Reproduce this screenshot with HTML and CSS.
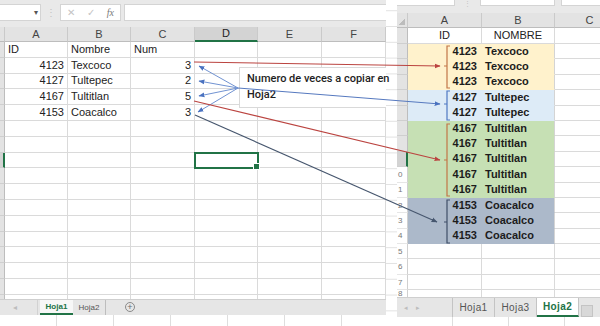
FILE: index.html
```html
<!DOCTYPE html>
<html lang="es">
<head>
    <meta charset="UTF-8">
    <meta name="viewport" content="width=device-width, initial-scale=1.0">
    <title>Hoja1 / Hoja2</title>
    <link rel="stylesheet" href="styles.css">
</head>
<body>
<div class="screen">

    <!-- Libro 1: Hoja1 -->
    <div class="book book-left">
        <div class="formula-bar">
            <div class="name-box"><span class="caret">▾</span></div>
            <span class="grip">⋮</span>
            <div class="fx-box"><span>✕</span><span>✓</span><span class="fx">fx</span></div>
            <div class="formula-input"></div>
        </div>

        <div class="grid">
            <table class="sheet">
                <colgroup>
                    <col class="w-rh"><col class="w-a"><col class="w-b"><col class="w-c"><col class="w-d"><col class="w-e"><col class="w-f">
                </colgroup>
                <tr class="head"><th class="rh"></th><th>A</th><th>B</th><th>C</th><th class="sel">D</th><th>E</th><th>F</th></tr>
                <tr><th class="rh"></th><td>ID</td><td>Nombre</td><td>Num</td><td></td><td></td><td></td></tr>
                <tr><th class="rh"></th><td class="r">4123</td><td>Texcoco</td><td class="r">3</td><td></td><td></td><td></td></tr>
                <tr><th class="rh"></th><td class="r">4127</td><td>Tultepec</td><td class="r">2</td><td></td><td></td><td></td></tr>
                <tr><th class="rh"></th><td class="r">4167</td><td>Tultitlan</td><td class="r">5</td><td></td><td></td><td></td></tr>
                <tr><th class="rh"></th><td class="r">4153</td><td>Coacalco</td><td class="r">3</td><td></td><td></td><td></td></tr>
                <tr><th class="rh"></th><td></td><td></td><td></td><td></td><td></td><td></td></tr>
                <tr><th class="rh"></th><td></td><td></td><td></td><td></td><td></td><td></td></tr>
                <tr><th class="rh sel"></th><td></td><td></td><td></td><td class="active"></td><td></td><td></td></tr>
                <tr><th class="rh"></th><td></td><td></td><td></td><td></td><td></td><td></td></tr>
                <tr><th class="rh"></th><td></td><td></td><td></td><td></td><td></td><td></td></tr>
                <tr><th class="rh"></th><td></td><td></td><td></td><td></td><td></td><td></td></tr>
                <tr><th class="rh"></th><td></td><td></td><td></td><td></td><td></td><td></td></tr>
                <tr><th class="rh"></th><td></td><td></td><td></td><td></td><td></td><td></td></tr>
                <tr><th class="rh"></th><td></td><td></td><td></td><td></td><td></td><td></td></tr>
                <tr><th class="rh"></th><td></td><td></td><td></td><td></td><td></td><td></td></tr>
                <tr><th class="rh"></th><td></td><td></td><td></td><td></td><td></td><td></td></tr>
                <tr><th class="rh"></th><td></td><td></td><td></td><td></td><td></td><td></td></tr>
            </table>
        </div>

        <div class="tabs">
            <div class="tab-nav">◂</div>
            <div class="tab active">Hoja1</div>
            <div class="tab">Hoja2</div>
            <div class="tab-add">+</div>
        </div>
        <div class="under"></div>
    </div>

    <div class="gap"></div>

    <!-- Libro 2: Hoja2 -->
    <div class="book book-right">
        <div class="top-strip">
            <div class="box box-1"></div>
            <span class="grip">⋮</span>
            <div class="box box-2"></div>
            <div class="box box-3"></div>
        </div>

        <div class="grid grid-2">
            <table class="sheet sheet-2">
                <colgroup>
                    <col class="w2-rh"><col class="w2-a"><col class="w2-b"><col class="w2-c">
                </colgroup>
                <tr class="head"><th class="rh corner"></th><th>A</th><th>B</th><th>C</th></tr>
                <tr class="first"><th class="rh"></th><td class="ctr">ID</td><td class="ctr">NOMBRE</td><td></td></tr>
                <tr class="band yellow"><th class="rh"></th><td class="num">4123</td><td class="name">Texcoco</td><td></td></tr>
                <tr class="band yellow"><th class="rh"></th><td class="num">4123</td><td class="name">Texcoco</td><td></td></tr>
                <tr class="band yellow"><th class="rh"></th><td class="num">4123</td><td class="name">Texcoco</td><td></td></tr>
                <tr class="band blue"><th class="rh"></th><td class="num">4127</td><td class="name">Tultepec</td><td></td></tr>
                <tr class="band blue"><th class="rh"></th><td class="num">4127</td><td class="name">Tultepec</td><td></td></tr>
                <tr class="band green"><th class="rh"></th><td class="num">4167</td><td class="name">Tultitlan</td><td></td></tr>
                <tr class="band green"><th class="rh"></th><td class="num">4167</td><td class="name">Tultitlan</td><td></td></tr>
                <tr class="band green"><th class="rh sel"></th><td class="num">4167</td><td class="name">Tultitlan</td><td></td></tr>
                <tr class="band green"><th class="rh plain">0</th><td class="num">4167</td><td class="name">Tultitlan</td><td></td></tr>
                <tr class="band green"><th class="rh plain">1</th><td class="num">4167</td><td class="name">Tultitlan</td><td></td></tr>
                <tr class="band slate"><th class="rh plain">2</th><td class="num">4153</td><td class="name">Coacalco</td><td></td></tr>
                <tr class="band slate"><th class="rh plain">3</th><td class="num">4153</td><td class="name">Coacalco</td><td></td></tr>
                <tr class="band slate"><th class="rh plain">4</th><td class="num">4153</td><td class="name">Coacalco</td><td></td></tr>
                <tr><th class="rh plain">5</th><td></td><td></td><td></td></tr>
                <tr><th class="rh plain">6</th><td></td><td></td><td></td></tr>
                <tr><th class="rh plain">7</th><td></td><td></td><td></td></tr>
                <tr class="last"><th class="rh plain">8</th><td></td><td></td><td></td></tr>
            </table>
        </div>

        <div class="tabs tabs-2">
            <div class="tab-nav"><span>◂</span><span>▸</span></div>
            <div class="tab">Hoja1</div>
            <div class="tab">Hoja3</div>
            <div class="tab active">Hoja2</div>
            <div class="tab-end"></div>
        </div>
        <div class="under under-2"></div>
    </div>

    <!-- Nota y flechas encima de las dos hojas -->
    <div class="callout">Numero de veces a copiar en<br>Hoja2</div>

    <svg class="notes" width="600" height="326" viewBox="0 0 600 326">
        <defs>
            <marker id="tip-red" viewBox="0 0 10 10" refX="9" refY="5" markerWidth="6" markerHeight="6" markerUnits="userSpaceOnUse" orient="auto">
                <path d="M0,1 L10,5 L0,9 z" fill="#bb4440"/>
            </marker>
            <marker id="tip-blue" viewBox="0 0 10 10" refX="9" refY="5" markerWidth="6" markerHeight="6" markerUnits="userSpaceOnUse" orient="auto">
                <path d="M0,1 L10,5 L0,9 z" fill="#4a72c0"/>
            </marker>
            <marker id="tip-slate" viewBox="0 0 10 10" refX="9" refY="5" markerWidth="6" markerHeight="6" markerUnits="userSpaceOnUse" orient="auto">
                <path d="M0,1 L10,5 L0,9 z" fill="#46566e"/>
            </marker>
        </defs>

        <!-- punteros de la nota -->
        <g stroke="#7193d2" stroke-width="1" fill="none">
            <line x1="238" y1="88" x2="199" y2="66" marker-end="url(#tip-blue)"/>
            <line x1="238" y1="88" x2="199" y2="81" marker-end="url(#tip-blue)"/>
            <line x1="238" y1="88" x2="199" y2="96" marker-end="url(#tip-blue)"/>
            <line x1="238" y1="88" x2="198" y2="112" marker-end="url(#tip-blue)"/>
        </g>

        <!-- flechas hacia Hoja2 -->
        <line x1="194" y1="62" x2="440" y2="66" stroke="#bb4440" stroke-width="1.1" marker-end="url(#tip-red)"/>
        <line x1="238" y1="88" x2="440" y2="104" stroke="#5679bf" stroke-width="1" marker-end="url(#tip-blue)"/>
        <line x1="194" y1="101" x2="440" y2="160" stroke="#bb4440" stroke-width="1.1" marker-end="url(#tip-red)"/>
        <line x1="195" y1="115" x2="437" y2="222" stroke="#46566e" stroke-width="1.1" marker-end="url(#tip-slate)"/>

        <!-- corchetes de cada grupo -->
        <g fill="none" stroke-width="1.2">
            <path d="M450,46 H447 V88 H450 M447,66 H444" stroke="#c27546"/>
            <path d="M450,91 H447 V120 H450 M447,104 H444" stroke="#4f78c2"/>
            <path d="M450,124 H447 V196 H450 M447,160 H444" stroke="#c27546"/>
            <path d="M450,200 H447 V243 H450 M447,222 H444" stroke="#3f4f68"/>
        </g>
    </svg>

</div>
</body>
</html>
```

FILE: styles.css
```css
/* General Reset */
* {
    margin: 0;
    padding: 0;
    box-sizing: border-box;
}

body {
    width: 600px;
    height: 326px;
    overflow: hidden;
    background: #fff;
    font-family: "Liberation Sans", Arial, sans-serif;
    font-size: 11px;
    color: #222;
}

.screen {
    position: relative;
    display: flex;
    width: 600px;
    height: 326px;
}

.book {
    display: flex;
    flex-direction: column;
    overflow: hidden;
}

.book-left {
    width: 386px;
}

.book-right {
    width: 203px;
}

.gap {
    width: 11px;
    background: linear-gradient(to bottom, transparent 15px, #e2e2e2 15px) 0 27px / 100% 15.8px repeat-y, #fff;
}

/* Formula bar */
.formula-bar {
    height: 27px;
    background: #e9e9e9;
    display: flex;
    align-items: flex-start;
    padding-top: 4px;
}

.name-box {
    width: 41px;
    height: 17px;
    background: #fff;
    border: 1px solid #d4d4d4;
    border-left: none;
    display: flex;
    justify-content: flex-end;
    align-items: center;
    padding-right: 2px;
}

.caret {
    font-size: 8px;
    color: #555;
}

.grip {
    width: 19px;
    text-align: center;
    color: #c2c2c2;
    font-size: 10px;
    line-height: 17px;
}

.fx-box {
    width: 61px;
    height: 17px;
    background: #fff;
    border: 1px solid #d4d4d4;
    display: flex;
    align-items: center;
    justify-content: space-around;
    color: #c4c4c4;
    font-size: 10px;
}

.fx {
    font-family: "Liberation Serif", serif;
    font-style: italic;
    color: #7a7a7a;
}

.formula-input {
    flex: 1;
    margin-left: 3px;
    height: 17px;
    background: #fff;
    border: 1px solid #d4d4d4;
    border-right: none;
}

/* Grid */
.grid {
    height: 272px;
    overflow: hidden;
}

.sheet {
    table-layout: fixed;
    border-collapse: separate;
    border-spacing: 0;
    width: 386px;
}

.sheet tr {
    height: 15.8px;
}

.sheet th,
.sheet td {
    border-right: 1px solid #dadada;
    border-bottom: 1px solid #dadada;
    padding: 0 3px;
    white-space: nowrap;
    overflow: hidden;
    line-height: 13px;
    font-weight: normal;
    text-align: left;
}

.sheet .head {
    height: 15px;
}

.sheet .head th {
    background: #e3e3e3;
    color: #444;
    text-align: center;
    border-right-color: #cacaca;
    border-bottom-color: #bdbdbd;
}

.sheet .head th.sel {
    background: #d3d3d3;
    color: #222;
    border-bottom: 2px solid #217346;
}

.sheet .rh {
    background: #e3e3e3;
    border-right-color: #bdbdbd;
    border-bottom-color: #cfcfcf;
    padding: 0;
}

.sheet .rh.sel {
    background: #d3d3d3;
    border-right: 2px solid #217346;
}

.w-rh { width: 5px; }
.w-a { width: 63px; }
.w-b { width: 63px; }
.w-c { width: 64px; }
.w-d { width: 63px; }
.w-e { width: 64px; }
.w-f { width: 64px; }

.r {
    text-align: right !important;
}

.sheet td.active {
    position: relative;
    overflow: visible;
    outline: 2px solid #217346;
    outline-offset: -1px;
}

.sheet td.active::after {
    content: "";
    position: absolute;
    right: -3px;
    bottom: -3px;
    width: 5px;
    height: 5px;
    background: #217346;
    border: 1px solid #fff;
}

/* Second book */
.top-strip {
    height: 13px;
    background: #e9e9e9;
    display: flex;
    align-items: flex-start;
}

.top-strip .box {
    height: 6px;
    background: #fff;
    border: 1px solid #d4d4d4;
    border-top: none;
}

.top-strip .grip {
    width: 25px;
    line-height: 7px;
    font-size: 7px;
}

.box-1 { width: 58px; border-left: none !important; }
.box-2 { width: 75px; }
.box-3 { flex: 1; margin-left: 6px; border-right: none !important; }

.grid-2 {
    height: 284px;
}

.sheet-2 {
    width: 228px;
}

.w2-rh { width: 11px; }
.w2-a { width: 74px; }
.w2-b { width: 73px; }
.w2-c { width: 70px; }

.sheet-2 tr {
    height: 15.4px;
}

.sheet-2 .head {
    height: 15px;
}

.sheet-2 .first {
    height: 16px;
}

.sheet-2 .corner {
    position: relative;
}

.sheet-2 .corner::after {
    content: "";
    position: absolute;
    right: 2px;
    bottom: 2px;
    width: 7px;
    height: 7px;
    background: linear-gradient(135deg, transparent 50%, #bcbcbc 50%);
}

.sheet-2 .rh.plain {
    background: #fff;
    border-right-color: #d0d0d0;
    border-bottom-color: #e6e6e6;
    color: #777;
    font-size: 8px;
    padding-left: 1px;
    overflow: visible;
}

.sheet-2 .last .rh.plain {
    vertical-align: top;
    line-height: 8px;
}

.ctr {
    text-align: center !important;
    color: #222;
}

.band td.num,
.band td.name {
    font-weight: bold;
    color: #1c1c1c;
}

.band td.num {
    text-align: right;
    padding-right: 4px;
}

.yellow td.num, .yellow td.name { background: #fff2cc; border-color: #fff2cc; }
.blue td.num, .blue td.name { background: #ddebf7; border-color: #ddebf7; }
.green td.num, .green td.name { background: #c6e0b4; border-color: #c6e0b4; }
.slate td.num, .slate td.name { background: #acb9ca; border-color: #acb9ca; }

.band td.name {
    border-right-color: #d4d4d4;
}

/* Sheet tabs */
.tabs {
    height: 16px;
    flex-shrink: 0;
    background: #e6e6e6;
    border-top: 1px solid #cfcfcf;
    display: flex;
    align-items: stretch;
    font-size: 8px;
}

.tab-nav {
    width: 38px;
    margin-right: 2px;
    border-right: 1px solid #d2d2d2;
    color: #bdbdbd;
    display: flex;
    align-items: center;
    padding-left: 13px;
}

.tab {
    width: 33px;
    display: flex;
    align-items: center;
    justify-content: center;
    color: #555;
    border-right: 1px solid #bdbdbd;
}

.tab.active {
    background: #f7f7f7;
    color: #217346;
    font-weight: bold;
    border-right: none;
    border-bottom: 2px solid #217346;
}

.tab-add {
    width: 10px;
    height: 10px;
    margin: 2px 0 0 19px;
    border: 1px solid #8a8a8a;
    border-radius: 50%;
    color: #6a6a6a;
    font-size: 9px;
    line-height: 8px;
    text-align: center;
}

.tabs-2 {
    height: 20px;
    font-size: 10px;
    letter-spacing: 0.4px;
}

.tabs-2 .tab-nav {
    width: 56px;
    margin-right: 0;
    border-right: 1px solid #c4c4c4;
    padding-left: 7px;
    gap: 8px;
    font-size: 7px;
}

.tabs-2 .tab {
    width: 42px;
    border-right: 1px solid #c4c4c4;
}

.tabs-2 .tab.active {
    background: #fff;
    border-bottom: 2px solid #217346;
}

.tab-end {
    width: 12px;
    height: 12px;
    margin: 7px 0 0 2px;
    background: #d8d8d8;
    border: 1px solid #c4c4c4;
}

.under {
    flex: 1;
    background: repeating-linear-gradient(to right, #fff 0, #fff 56px, #dedede 56px, #dedede 57px);
}

.under-2 {
    background: repeating-linear-gradient(to right, #fff 0, #fff 55px, #dedede 55px, #dedede 56px);
}

/* Annotation layer */
.callout {
    position: absolute;
    left: 239px;
    top: 67px;
    width: 147px;
    height: 41px;
    background: #fff;
    border: 1px solid #d9d9d9;
    border-right: none;
    padding: 3px 0 0 7px;
    font-family: Roboto, "Liberation Sans", sans-serif;
    font-weight: 500;
    font-size: 11px;
    line-height: 16px;
    color: #1e1e1e;
    white-space: nowrap;
}

.notes {
    position: absolute;
    left: 0;
    top: 0;
    pointer-events: none;
}
```
